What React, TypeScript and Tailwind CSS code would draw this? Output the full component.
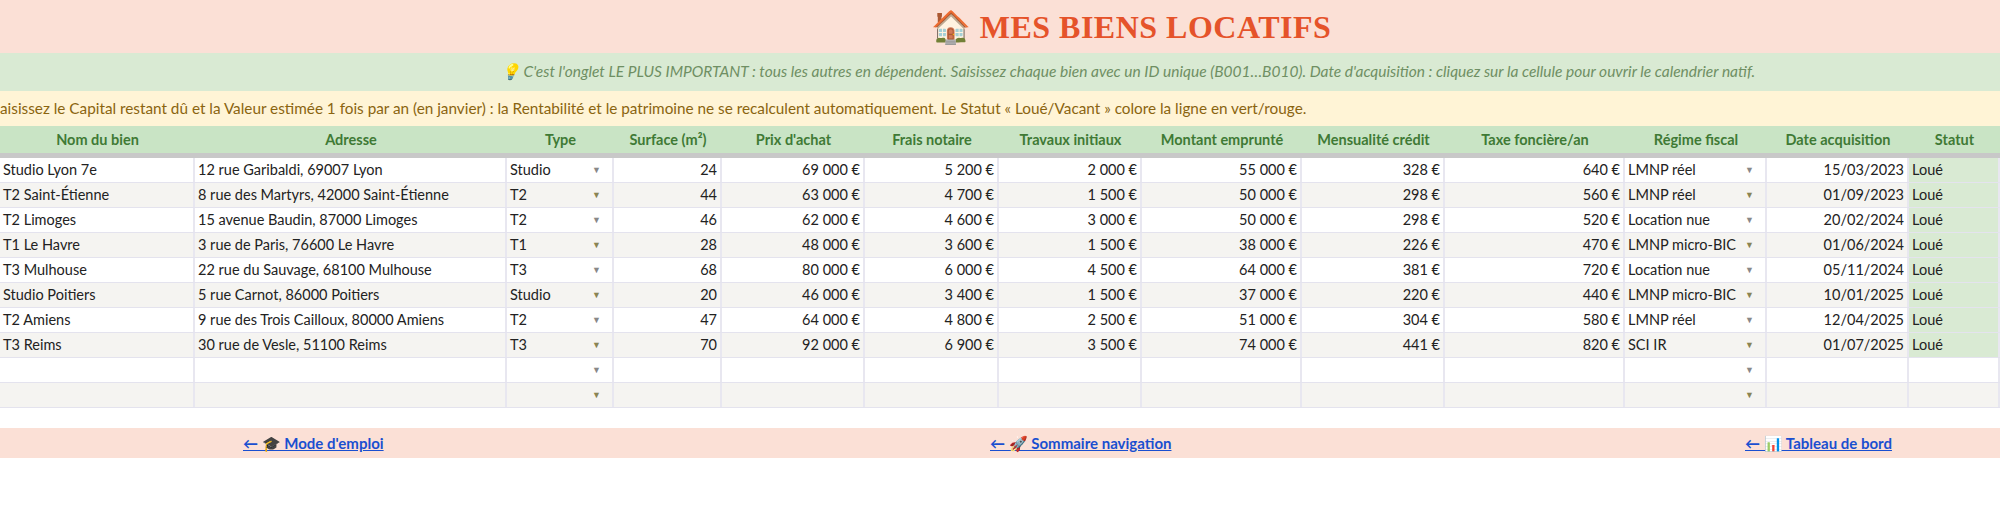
import React from "react";

const cols = [195, 312, 107, 108, 143, 134, 143, 160, 143, 180, 142, 142, 91];
const heads = ["Nom du bien","Adresse","Type","Surface (m²)","Prix d'achat","Frais notaire","Travaux initiaux","Montant emprunté","Mensualité crédit","Taxe foncière/an","Régime fiscal","Date acquisition","Statut"];
const rows = [
  ["Studio Lyon 7e","12 rue Garibaldi, 69007 Lyon","Studio","24","69 000 €","5 200 €","2 000 €","55 000 €","328 €","640 €","LMNP réel","15/03/2023","Loué"],
  ["T2 Saint-Étienne","8 rue des Martyrs, 42000 Saint-Étienne","T2","44","63 000 €","4 700 €","1 500 €","50 000 €","298 €","560 €","LMNP réel","01/09/2023","Loué"],
  ["T2 Limoges","15 avenue Baudin, 87000 Limoges","T2","46","62 000 €","4 600 €","3 000 €","50 000 €","298 €","520 €","Location nue","20/02/2024","Loué"],
  ["T1 Le Havre","3 rue de Paris, 76600 Le Havre","T1","28","48 000 €","3 600 €","1 500 €","38 000 €","226 €","470 €","LMNP micro-BIC","01/06/2024","Loué"],
  ["T3 Mulhouse","22 rue du Sauvage, 68100 Mulhouse","T3","68","80 000 €","6 000 €","4 500 €","64 000 €","381 €","720 €","Location nue","05/11/2024","Loué"],
  ["Studio Poitiers","5 rue Carnot, 86000 Poitiers","Studio","20","46 000 €","3 400 €","1 500 €","37 000 €","220 €","440 €","LMNP micro-BIC","10/01/2025","Loué"],
  ["T2 Amiens","9 rue des Trois Cailloux, 80000 Amiens","T2","47","64 000 €","4 800 €","2 500 €","51 000 €","304 €","580 €","LMNP réel","12/04/2025","Loué"],
  ["T3 Reims","30 rue de Vesle, 51100 Reims","T3","70","92 000 €","6 900 €","3 500 €","74 000 €","441 €","820 €","SCI IR","01/07/2025","Loué"],
  ["","","","","","","","","","","","",""],
  ["","","","","","","","","","","","",""],
];
const right = new Set([3,4,5,6,7,8,9,11]);
const dd = new Set([2,10]);

export default function App() {
  return (
    <div className="w-[2000px] h-[507px] bg-white text-[14.5px] text-[#222]" style={{ fontFamily: "Lato, 'Noto Sans', sans-serif" }}>
      <div className="h-[53px] bg-[#fbe0d6] flex items-center justify-center">
        <div className="ml-[262px] text-[32px] font-bold text-[#e5532a] tracking-[0.5px]" style={{ fontFamily: "'Liberation Serif', serif" }}>🏠 MES BIENS LOCATIFS</div>
      </div>
      <div className="h-[38px] bg-[#d9ead3] flex items-center justify-center italic text-[#6f8f63] text-[15.5px]">
        <span className="ml-[256px] whitespace-nowrap">💡 C'est l'onglet LE PLUS IMPORTANT : tous les autres en dépendent. Saisissez chaque bien avec un ID unique (B001…B010). Date d'acquisition : cliquez sur la cellule pour ouvrir le calendrier natif.</span>
      </div>
      <div className="h-[35px] bg-[#fff4d6] flex items-center overflow-hidden whitespace-nowrap text-[#8a6410] text-[15.3px]">
        <span>aisissez le Capital restant dû et la Valeur estimée 1 fois par an (en janvier) : la Rentabilité et le patrimoine ne se recalculent automatiquement. Le Statut « Loué/Vacant » colore la ligne en vert/rouge.</span>
      </div>
      <div className="flex h-[27px] bg-[#c9e4c5] border-b-[5px] border-[#c8c8c8] box-content">
        {heads.map((h, i) => (
          <div key={i} style={{ width: cols[i] }} className="flex items-center justify-center font-bold text-[#3f7a35] text-[14.5px]">{h}</div>
        ))}
      </div>
      {rows.map((r, ri) => (
        <div key={ri} className={`flex h-[25px] border-b border-[#e4e3ee] ${ri % 2 ? "bg-[#f5f4f1]" : "bg-white"}`}>
          {r.map((c, ci) => (
            <div key={ci} style={{ width: cols[ci] }} className={`flex items-center px-[3px] border-r-2 border-[#e8e7f0] ${right.has(ci) ? "justify-end" : "justify-between"} ${ci === 12 ? (ri < 8 ? "bg-[#d9ead3] border-r-0" : "border-r-0") : ""}`}>
              <span>{c}</span>
              {dd.has(ci) && <span className={`text-[9px] mr-[8px] ${ri % 2 ? "text-[#8a8452]" : "text-[#888]"}`}>▼</span>}
            </div>
          ))}
        </div>
      ))}
      <div className="h-[20px]" />
      <div className="h-[30px] bg-[#fbe0d6] flex items-center font-bold text-[#1a4fd0] text-[15px]">
        <div className="ml-[243px] w-[747px]"><span className="underline">← 🎓 Mode d'emploi</span></div>
        <div className="w-[755px]"><span className="underline">← 🚀 Sommaire navigation</span></div>
        <div><span className="underline">← 📊 Tableau de bord</span></div>
      </div>
    </div>
  );
}
